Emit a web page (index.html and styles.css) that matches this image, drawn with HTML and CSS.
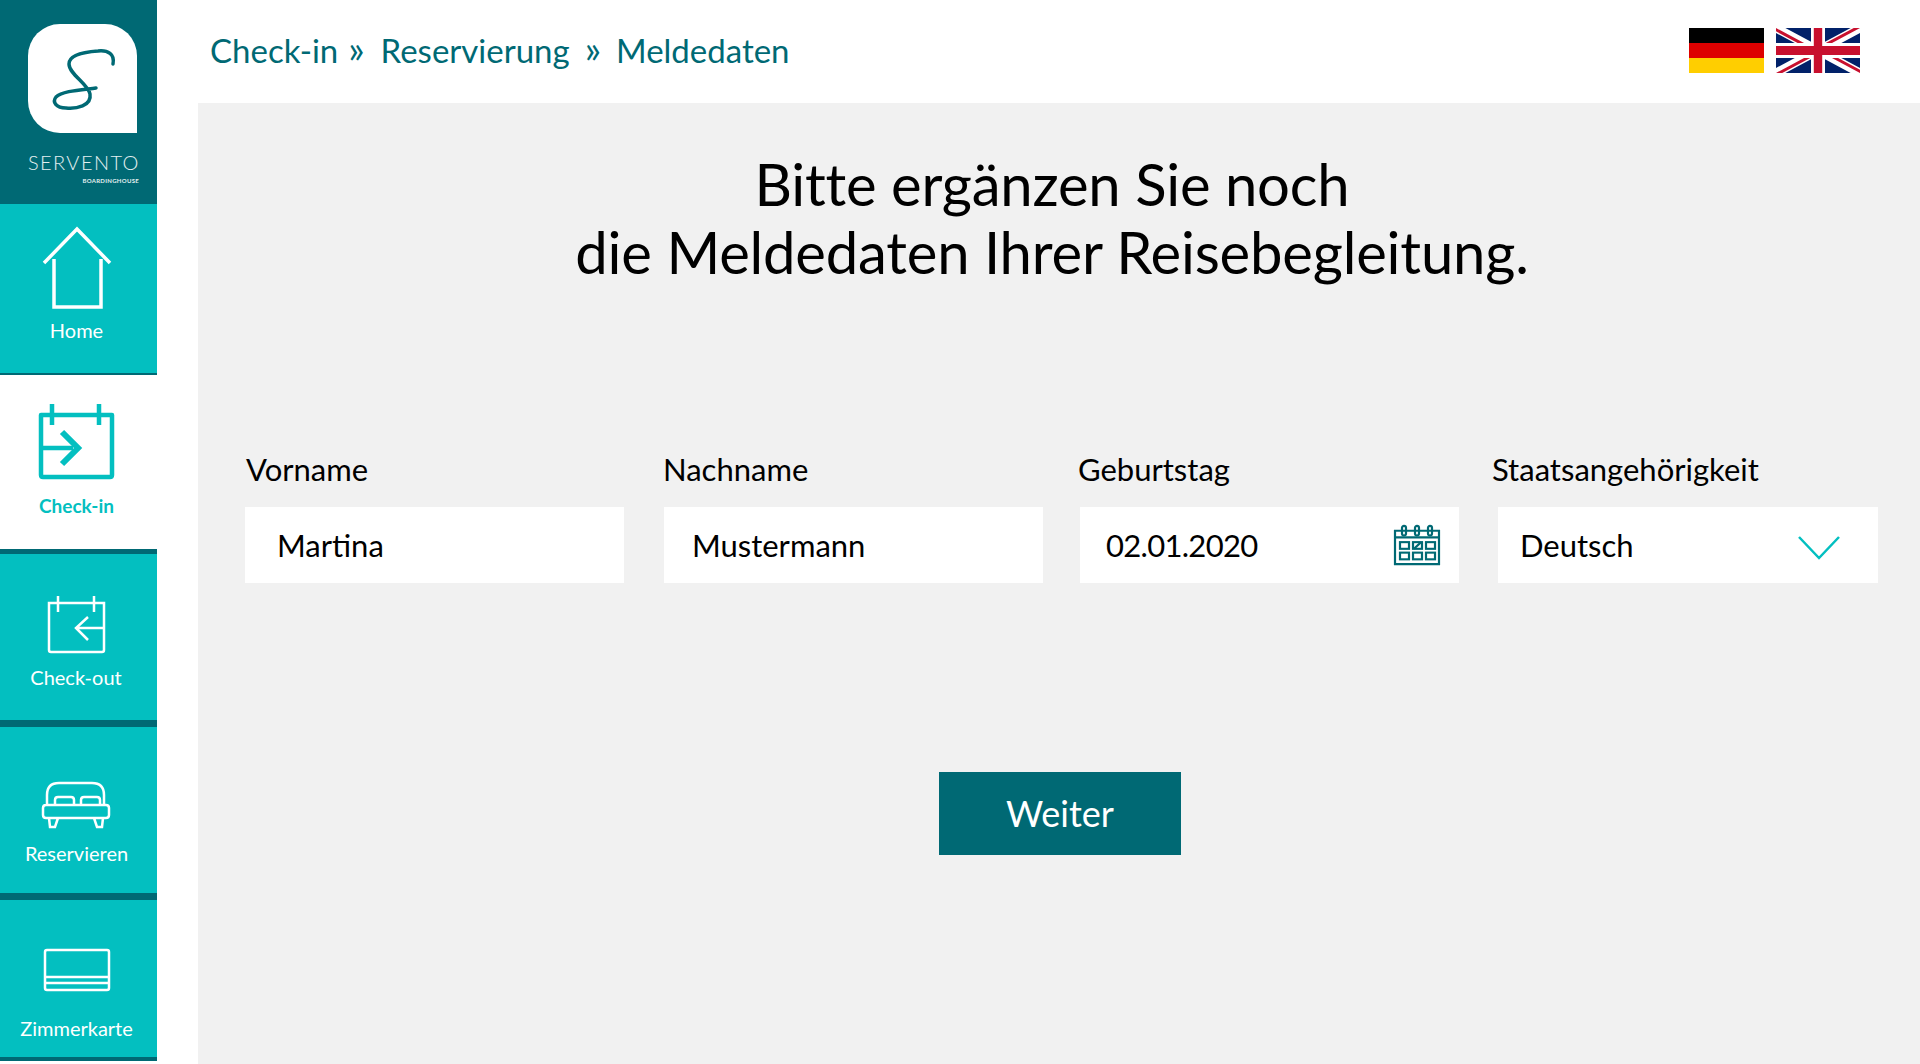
FILE: index.html
```html
<!DOCTYPE html>
<html lang="de">
<head>
  <meta charset="UTF-8">
  <title>Servento Check-in</title>
  <link rel="stylesheet" href="styles.css">
</head>
<body>
  <nav class="sidebar">
    <div class="brand">
      <div class="logo">
        <svg width="109" height="109" viewBox="0 0 109 109"><path class="logo-s" d="M85 40 C87 30 80 26 70 27 C55 28 41 31 41 40 C41 50 60 60 62 70 C64 82 48 85 38 84 C28 84 24 78 28 73 C34 67 52 66 68 64"/></svg>
      </div>
      <div class="brand-name">SERVENTO</div>
      <div class="brand-sub">BOARDINGHOUSE</div>
    </div>

    <a class="nav-item nav-home">
      <svg width="72" height="84" viewBox="0 0 72 84"><path class="icon" d="M3 37 L36 3 L69 37 M13 33 V81 H60 V33"/></svg>
      <span>Home</span>
    </a>
    <a class="nav-item nav-checkin active">
      <svg width="79" height="79" viewBox="0 0 79 79"><path class="icon-bold" d="M4 13 H75 V73 Q75 75 73 75 H6 Q4 75 4 73 Z M15 2 V23 M62 2 V23 M4 46 H36"/><path class="icon-arrow" d="M25 30 L41 46 L25 62"/></svg>
      <span>Check-in</span>
    </a>
    <a class="nav-item nav-checkout">
      <svg width="65" height="61" viewBox="0 0 65 61"><path class="icon-thin" d="M4 8 H59 V55 Q59 57 57 57 H6 Q4 57 4 55 Z M13 1 V17 M49 1 V17 M59 33 H31 M43 22 L31 33 L43 45"/></svg>
      <span>Check-out</span>
    </a>
    <a class="nav-item nav-reserve">
      <svg width="70" height="48" viewBox="0 0 70 48"><path class="icon-thin" d="M6 24 V14 Q6 2 18 2 H51 Q63 2 63 14 V24 M14 24 V19 Q14 16 17 16 H30 Q33 16 33 19 V24 M40 24 V19 Q40 16 43 16 H56 Q59 16 59 19 V24 M5 24 H65 Q68 24 68 27 V34 Q68 37 65 37 H5 Q2 37 2 34 V27 Q2 24 5 24 Z M8 37 L9 46 H14 L17 37 M53 37 L56 46 H61 L62 37"/></svg>
      <span>Reservieren</span>
    </a>
    <a class="nav-item nav-card">
      <svg width="68" height="44" viewBox="0 0 68 44"><path class="icon-thin" d="M4 2 H64 Q66 2 66 4 V40 Q66 42 64 42 H4 Q2 42 2 40 V4 Q2 2 4 2 Z M2 29 H66 M2 35 H66"/></svg>
      <span>Zimmerkarte</span>
    </a>
  </nav>

  <div class="page">
    <header class="topbar">
      <div class="breadcrumb">
        <span>Check-in</span><span class="sep sep-first">»</span><span>Reservierung</span><span class="sep">»</span><span>Meldedaten</span>
      </div>
      <div class="flags">
        <svg width="75" height="45" viewBox="0 0 75 45">
          <rect width="75" height="15" fill="#000"/>
          <rect y="15" width="75" height="15" fill="#dd0000"/>
          <rect y="30" width="75" height="15" fill="#ffce00"/>
        </svg>
        <svg width="84" height="45" viewBox="0 0 60 30" preserveAspectRatio="none">
          <clipPath id="uk-clip"><path d="M30 15 H60 V30 Z V30 H0 Z H0 V0 Z V0 H60 Z"/></clipPath>
          <rect width="60" height="30" fill="#012169"/>
          <path d="M0 0 L60 30 M60 0 L0 30" stroke="#fff" stroke-width="6"/>
          <path d="M0 0 L60 30 M60 0 L0 30" stroke="#c8102e" stroke-width="4" clip-path="url(#uk-clip)"/>
          <path d="M30 0 V30 M0 15 H60" stroke="#fff" stroke-width="10"/>
          <path d="M30 0 V30 M0 15 H60" stroke="#c8102e" stroke-width="6"/>
        </svg>
      </div>
    </header>

    <main class="panel">
      <h1 class="title">Bitte ergänzen Sie noch<br>die Meldedaten Ihrer Reisebegleitung.</h1>

      <div class="form">
        <div class="form-group">
          <label class="label-first">Vorname</label>
          <div class="field field-first">Martina</div>
        </div>
        <div class="form-group">
          <label class="label-second">Nachname</label>
          <div class="field field-second">Mustermann</div>
        </div>
        <div class="form-group group-date">
          <label class="label-date">Geburtstag</label>
          <div class="field field-date">
            <span class="date-value">02.01.2020</span>
            <svg width="48" height="42" viewBox="0 0 48 44" preserveAspectRatio="none">
              <path class="cal" d="M2 7 H46 V42 H2 Z M2 14 H46"/>
              <rect class="cal" x="9" y="2" width="4" height="10" rx="2"/>
              <rect class="cal" x="22" y="2" width="4" height="10" rx="2"/>
              <rect class="cal" x="35" y="2" width="4" height="10" rx="2"/>
              <rect class="cal" x="7" y="19" width="9" height="7"/>
              <rect class="cal" x="20" y="19" width="9" height="7"/>
              <rect class="cal" x="33" y="19" width="9" height="7"/>
              <rect class="cal" x="7" y="30" width="9" height="7"/>
              <rect class="cal" x="20" y="30" width="9" height="7"/>
              <rect class="cal" x="33" y="30" width="9" height="7"/>
              <path class="cal" d="M21 26 L28 19"/>
            </svg>
          </div>
        </div>
        <div class="form-group group-nation">
          <label class="label-nation">Staatsangehörigkeit</label>
          <div class="field field-select">
            Deutsch
            <svg class="chevron-icon" width="42" height="24" viewBox="0 0 42 24"><path class="chevron" d="M1 1 L21 22 L41 1"/></svg>
          </div>
        </div>
      </div>

      <div class="actions">
        <button class="button">Weiter</button>
      </div>
    </main>
  </div>
</body>
</html>
```

FILE: styles.css
```css
* { box-sizing: border-box; }
html, body { margin: 0; height: 100%; }
body { display: flex; height: 1064px; overflow: hidden; background: #fff; color: #000; font-family: "Lato", "Open Sans", sans-serif; }

/* sidebar */
.sidebar { width: 157px; flex-shrink: 0; display: flex; flex-direction: column; }
.brand { height: 204px; background: #006974; padding: 24px 0 0 28px; color: #e3f0f1; }
.logo { width: 109px; height: 109px; background: #fff; border-radius: 32px 32px 0 32px; }
.logo-s { fill: none; stroke: #006974; stroke-width: 3.5; stroke-linecap: round; }
.brand-name { font-size: 20px; font-weight: 300; letter-spacing: 1.4px; margin-top: 17px; line-height: 24px; white-space: nowrap; }
.brand-sub { font-size: 6px; font-weight: 700; letter-spacing: 0.3px; text-align: right; width: 111px; line-height: 8px; margin-top: 3px; }

.nav-item { display: flex; flex-direction: column; align-items: center; background: #03bfc0; color: #fff; font-size: 20px; border-bottom: 5px solid #006974; }
.nav-item span { display: block; line-height: 24px; }
.nav-home { height: 171px; padding-top: 22px; border-bottom-width: 2px; }
.nav-home span { margin-top: 8px; margin-left: -4px; }
.nav-home svg { margin-left: -3px; }
.nav-checkin { height: 179px; padding-top: 27px; background: #fff; color: #03bfc0; font-weight: 700; font-size: 19px; }
.nav-checkin span { margin-top: 13px; margin-left: -4px; }
.nav-checkin svg { margin-left: -4px; }
.nav-checkout { height: 173px; padding-top: 41px; border-bottom-width: 7px; }
.nav-checkout span { margin-top: 9px; margin-left: -5px; }
.nav-checkout svg { margin-left: -2px; }
.nav-reserve { height: 173px; padding-top: 54px; border-bottom-width: 7px; }
.nav-reserve span { margin-top: 12px; margin-left: -4px; }
.nav-reserve svg { margin-left: -5px; }
.nav-card { height: 161px; padding-top: 48px; border-bottom-width: 4px; }
.nav-card span { margin-top: 24px; margin-left: -4px; }
.nav-card svg { margin-left: -3px; }

.icon { fill: none; stroke: #fff; stroke-width: 3.5; }
.icon-thin { fill: none; stroke: #fff; stroke-width: 2.5; }
.icon-bold { fill: none; stroke: #03bfc0; stroke-width: 4.5; stroke-linejoin: round; }
.icon-arrow { fill: none; stroke: #03bfc0; stroke-width: 6; }

/* top bar */
.page { flex: 1; display: flex; flex-direction: column; min-width: 0; }
.topbar { height: 103px; flex-shrink: 0; display: flex; justify-content: space-between; align-items: center; padding: 0 60px 5px 53px; }
.breadcrumb { display: flex; align-items: baseline; color: #006974; font-size: 33px; line-height: 44px; }
.sep { margin: 0 15px; font-size: 38px; }
.sep-first { margin: 0 16px 0 10px; }
.flags { display: flex; gap: 12px; margin-top: 3px; }

/* main panel */
.panel { flex: 1; margin-left: 41px; background: #f1f1f1; display: flex; flex-direction: column; align-items: stretch; }
.title { margin: 47px 14px 0 0; font-size: 58px; font-weight: 400; letter-spacing: -0.2px; line-height: 68px; text-align: center; }

.form { display: flex; margin: 163px 0 0 47px; }
.form-group { width: 379px; margin-right: 40px; flex-shrink: 0; }
.form-group label { display: block; font-size: 31px; line-height: 40px; margin-bottom: 18px; }
.label-first { margin-left: 1px; }
.label-second { margin-left: -1px; }
.label-date { margin-left: -2px; }
.label-nation { margin-left: -6px; }
.group-date { margin-left: -3px; margin-right: 39px; }
.group-nation { width: 380px; margin-right: 0; }
.field { height: 76px; background: #fff; display: flex; align-items: center; justify-content: space-between; font-size: 31px; }
.field-first { padding-left: 32px; }
.field-second { padding-left: 28px; }
.field-date { padding: 0 18px 0 26px; }
.date-value { letter-spacing: -0.7px; }
.field-select { padding: 0 38px 0 22px; }
.cal { fill: none; stroke: #006974; stroke-width: 2.2; }
.chevron-icon { margin-top: 6px; }
.chevron { fill: none; stroke: #03bfc0; stroke-width: 2.5; }

.actions { display: flex; justify-content: center; margin: 189px 0 0 2px; }
.button { width: 242px; height: 83px; border: 0; border-radius: 0; background: #006974; color: #fff; font-family: inherit; font-size: 36px; padding-bottom: 3px; }
```
